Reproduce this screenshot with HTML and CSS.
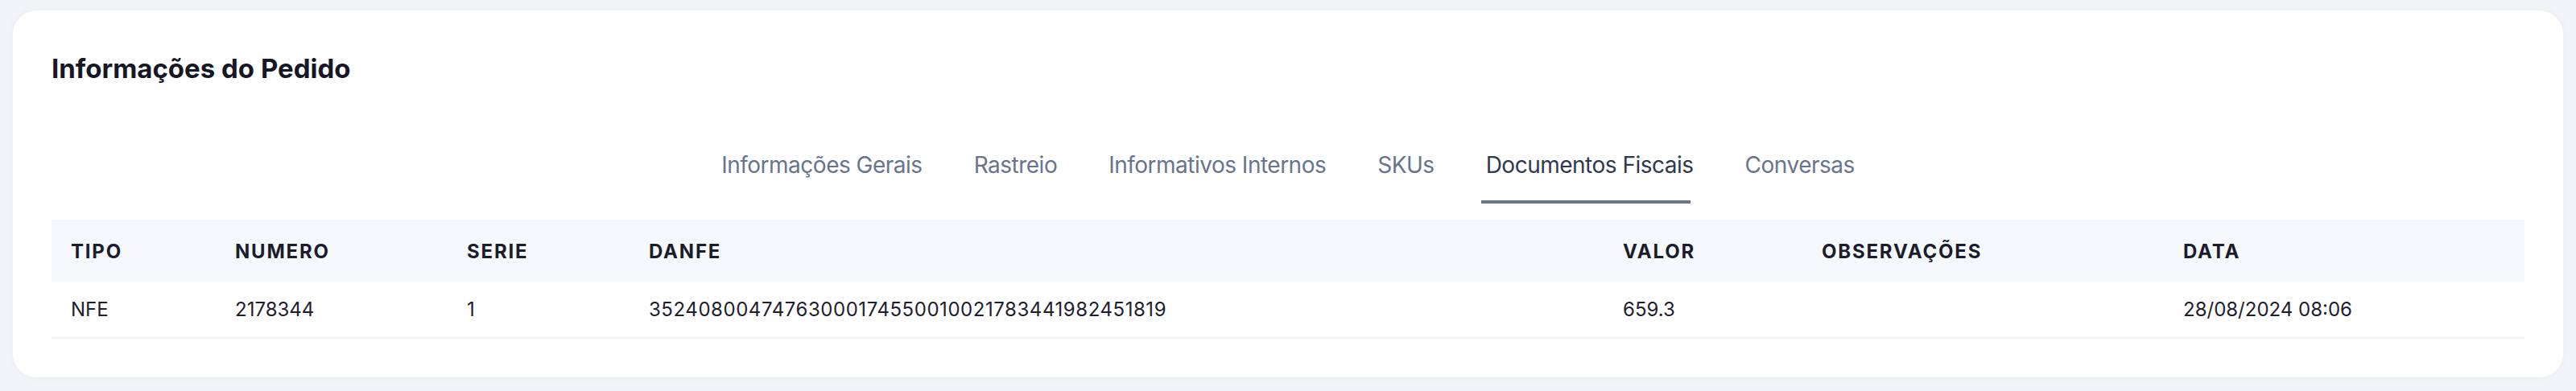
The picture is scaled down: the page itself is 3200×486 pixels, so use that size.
FILE: index.html
```html
<!DOCTYPE html>
<html lang="pt-BR">
<head>
    <meta charset="UTF-8">
    <meta name="viewport" content="width=device-width, initial-scale=1.0">
    <title>Informações do Pedido</title>
    <link rel="stylesheet" href="styles.css">
</head>
<body>
    <div class="page">
        <!-- Card do pedido -->
        <section class="card">
            <h2 class="card-title">Informações do Pedido</h2>

            <!-- Abas -->
            <nav class="tabs">
                <button class="tab">Informações Gerais</button>
                <button class="tab">Rastreio</button>
                <button class="tab">Informativos Internos</button>
                <button class="tab">SKUs</button>
                <button class="tab active">Documentos Fiscais</button>
                <button class="tab">Conversas</button>
            </nav>

            <!-- Documentos fiscais -->
            <table class="docs-table">
                <colgroup>
                    <col style="width: 204px">
                    <col style="width: 288px">
                    <col style="width: 226px">
                    <col style="width: 1210px">
                    <col style="width: 247px">
                    <col style="width: 449px">
                    <col style="width: 448px">
                </colgroup>
                <thead>
                    <tr>
                        <th>Tipo</th>
                        <th>Numero</th>
                        <th>Serie</th>
                        <th>Danfe</th>
                        <th>Valor</th>
                        <th>Observações</th>
                        <th>Data</th>
                    </tr>
                </thead>
                <tbody>
                    <tr>
                        <td>NFE</td>
                        <td>2178344</td>
                        <td>1</td>
                        <td class="danfe">35240800474763000174550010021783441982451819</td>
                        <td>659.3</td>
                        <td></td>
                        <td>28/08/2024 08:06</td>
                    </tr>
                </tbody>
            </table>
        </section>
    </div>
</body>
</html>
```

FILE: styles.css
```css
body {
    margin: 0;
    padding: 0;
    background-color: #f3f4f7;
    font-family: Inter, "Noto Sans", Arial, sans-serif;
    color: #1b1e2e;
}

.page {
    padding: 13px 16px 19px;
}

.card {
    background-color: #fff;
    border-radius: 30px;
    padding: 48px;
    box-shadow: 0 0 12px rgba(30, 40, 70, 0.04);
}

.card-title {
    margin: 0;
    font-size: 33px;
    line-height: 48px;
    font-weight: 700;
    color: #161827;
}

.tabs {
    display: flex;
    justify-content: center;
    gap: 64px;
    margin-top: 79px;
}

.tab {
    position: relative;
    background: none;
    border: none;
    padding: 0 0 31px;
    font-family: inherit;
    font-size: 28px;
    line-height: 34px;
    letter-spacing: -0.5px;
    color: #66758d;
    cursor: pointer;
}

.tab.active {
    color: #2f3a4f;
}

.tab.active::after {
    content: "";
    position: absolute;
    left: -6px;
    right: 4px;
    bottom: 0;
    height: 4px;
    background-color: #687690;
}

.docs-table {
    width: 100%;
    margin-top: 20px;
    border-collapse: collapse;
    table-layout: fixed;
}

.docs-table th {
    height: 75px;
    padding: 2px 24px 0;
    background-color: #f7f8fb;
    text-align: left;
    font-size: 24px;
    font-weight: 700;
    letter-spacing: 1.8px;
    text-transform: uppercase;
    color: #1a1d2e;
}

.docs-table td {
    height: 69px;
    padding: 0 24px;
    font-size: 24px;
    color: #1e2030;
    border-bottom: 2px solid #f2f4f8;
}

.docs-table td.danfe {
    letter-spacing: 0.55px;
}
```
